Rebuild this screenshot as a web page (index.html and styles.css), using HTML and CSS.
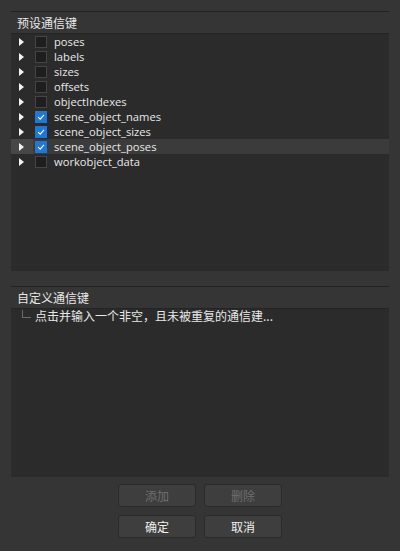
FILE: index.html
```html
<!DOCTYPE html>
<html>
<head>
<meta charset="utf-8">
<link rel="stylesheet" href="styles.css">
</head>
<body>
<div class="page">
  <section class="group group-preset">
    <div class="group-header">预设通信键</div>
    <div class="list">
      <div class="row"><span class="arrow"></span><span class="check"></span><span class="label">poses</span></div>
      <div class="row"><span class="arrow"></span><span class="check"></span><span class="label">labels</span></div>
      <div class="row"><span class="arrow"></span><span class="check"></span><span class="label">sizes</span></div>
      <div class="row"><span class="arrow"></span><span class="check"></span><span class="label">offsets</span></div>
      <div class="row"><span class="arrow"></span><span class="check"></span><span class="label">objectIndexes</span></div>
      <div class="row"><span class="arrow"></span><span class="check checked"><svg viewBox="0 0 12 12"><path d="M2.5 6.2 L5 8.6 L9.6 3.4" fill="none" stroke="#fff" stroke-width="1.3"/></svg></span><span class="label">scene_object_names</span></div>
      <div class="row"><span class="arrow"></span><span class="check checked"><svg viewBox="0 0 12 12"><path d="M2.5 6.2 L5 8.6 L9.6 3.4" fill="none" stroke="#fff" stroke-width="1.3"/></svg></span><span class="label">scene_object_sizes</span></div>
      <div class="row selected"><span class="arrow"></span><span class="check checked"><svg viewBox="0 0 12 12"><path d="M2.5 6.2 L5 8.6 L9.6 3.4" fill="none" stroke="#fff" stroke-width="1.3"/></svg></span><span class="label">scene_object_poses</span></div>
      <div class="row"><span class="arrow"></span><span class="check"></span><span class="label">workobject_data</span></div>
    </div>
  </section>
  <section class="group group-custom">
    <div class="group-header">自定义通信键</div>
    <div class="list list-custom">
      <div class="row row-custom"><span class="branch"></span><span class="label">点击并输入一个非空，且未被重复的通信建...</span></div>
    </div>
  </section>
  <div class="buttons">
    <button class="btn disabled">添加</button>
    <button class="btn disabled">删除</button>
    <button class="btn">确定</button>
    <button class="btn">取消</button>
  </div>
</div>
</body>
</html>
```
FILE: styles.css
```css
html, body {
  margin: 0;
  padding: 0;
}
body {
  width: 400px;
  height: 551px;
  background: #353535;
  font-family: "Noto Sans CJK SC", "Open Sans", sans-serif;
  font-size: 12px;
  color: #e8e8e8;
  overflow: hidden;
}
.page {
  padding: 11px 11px 0 11px;
  display: flex;
  flex-direction: column;
}
.group {
  border-top: 1px solid #222222;
}
.group-header {
  height: 21px;
  line-height: 21px;
  padding-left: 6px;
  border-bottom: 1px solid #242424;
  color: #e8e8e8;
  font-size: 12px;
}
.list {
  background: #2b2b2b;
  height: 237px;
}
.group-custom {
  margin-top: 15px;
}
.list-custom {
  height: 168px;
}
.row {
  height: 15px;
  display: flex;
  align-items: center;
  position: relative;
}
.row.selected {
  background: #3b3b3b;
}
.row.selected .arrow {
  background: #474747;
}
.arrow {
  width: 22px;
  height: 15px;
  flex: none;
  position: relative;
}
.arrow::after {
  content: "";
  position: absolute;
  left: 8px;
  top: 4px;
  border-left: 5px solid #f2f2f2;
  border-top: 4px solid transparent;
  border-bottom: 4px solid transparent;
}
.check {
  width: 10px;
  height: 10px;
  border: 1px solid #454545;
  background: #1e1e1e;
  margin-left: 2px;
  flex: none;
  display: flex;
}
.check.checked {
  background: #1f78d8;
  border-color: #1f78d8;
}
.check svg {
  width: 10px;
  height: 10px;
}
.label {
  margin-left: 7px;
  font-family: "Open Sans", "Noto Sans CJK SC", sans-serif;
  font-size: 11.2px;
  color: #e8e8e8;
  white-space: nowrap;
}
.row-custom {
  height: 16px;
  align-items: flex-start;
}
.branch {
  width: 8px;
  height: 7px;
  border-left: 1px solid #6a6a6a;
  border-bottom: 1px solid #6a6a6a;
  margin-left: 11px;
  margin-top: 1px;
  flex: none;
}
.row-custom .label {
  margin-left: 4px;
  font-family: "Noto Sans CJK SC", sans-serif;
  font-size: 12px;
  line-height: 16px;
  margin-top: -1px;
}
.buttons {
  margin-top: 7px;
  align-self: center;
  display: grid;
  grid-template-columns: 78px 78px;
  column-gap: 8px;
  row-gap: 8px;
}
.btn {
  height: 23px;
  margin: 0;
  padding: 0;
  background: #3e3e3e;
  border: 1px solid #2a2a2a;
  border-radius: 3px;
  color: #f0f0f0;
  font-family: "Noto Sans CJK SC", sans-serif;
  font-size: 12px;
  line-height: 21px;
}
.btn.disabled {
  color: #6e6e6e;
}
```
